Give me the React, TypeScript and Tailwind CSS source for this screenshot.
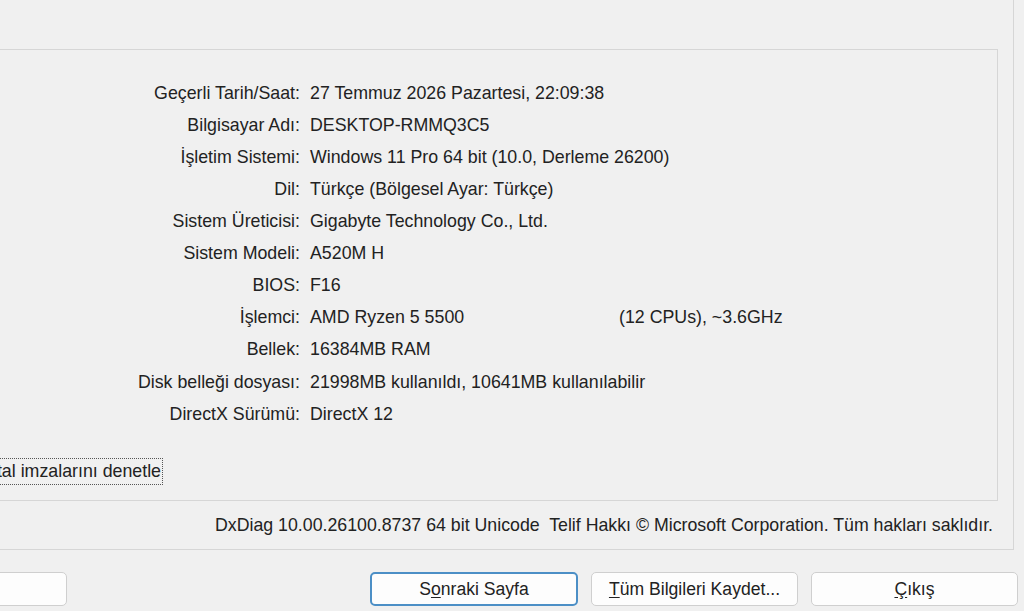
import React from "react";

const rows: [string, string, string?][] = [
  ["Geçerli Tarih/Saat:", "27 Temmuz 2026 Pazartesi, 22:09:38"],
  ["Bilgisayar Adı:", "DESKTOP-RMMQ3C5"],
  ["İşletim Sistemi:", "Windows 11 Pro 64 bit (10.0, Derleme 26200)"],
  ["Dil:", "Türkçe (Bölgesel Ayar: Türkçe)"],
  ["Sistem Üreticisi:", "Gigabyte Technology Co., Ltd."],
  ["Sistem Modeli:", "A520M H"],
  ["BIOS:", "F16"],
  ["İşlemci:", "AMD Ryzen 5 5500", "(12 CPUs), ~3.6GHz"],
  ["Bellek:", "16384MB RAM"],
  ["Disk belleği dosyası:", "21998MB kullanıldı, 10641MB kullanılabilir"],
  ["DirectX Sürümü:", "DirectX 12"],
];

// Alt çizgili kısayol harfi olan buton
const DlgButton: React.FC<{
  before?: string;
  mnemonic?: string;
  after?: string;
  focused?: boolean;
  className?: string;
}> = ({ before = "", mnemonic = "", after = "", focused, className = "" }) => (
  <div
    className={`h-[34px] rounded-[5px] bg-[#fdfdfd] flex items-center justify-center text-[17.6px] text-[#222] ${
      focused ? "border-2 border-[#4c8fc6]" : "border border-[#cfcfcf]"
    } ${className}`}
  >
    {before}
    {mnemonic && <span className="underline underline-offset-2">{mnemonic}</span>}
    {after}
  </div>
);

export default function App() {
  return (
    <div
      className="w-[1024px] h-[611px] bg-[#f0f0f0] overflow-hidden text-[#222]"
      style={{ fontFamily: '"Liberation Sans", Arial, sans-serif' }}
    >
      {/* Sekme sayfası */}
      <div className="h-[550px] w-[1014px] border-r border-b border-[#d6d6d6] pt-[49px] pr-[15px]">
        {/* Sistem bilgisi grup kutusu */}
        <div className="h-[452px] border-t border-r border-b border-[#d6d6d6] pt-[27px]">
          {rows.map(([label, value, extra]) => (
            <div key={label} className="h-[32.1px] flex items-center text-[17.8px]">
              <div className="w-[300px] text-right whitespace-nowrap">{label}</div>
              <div className="pl-[10px] w-[319px] whitespace-nowrap">{value}</div>
              {extra && <div className="whitespace-nowrap">{extra}</div>}
            </div>
          ))}
          <div className="mt-[28px] flex justify-end w-[163px] overflow-hidden">
            <div className="border border-dotted border-[#555] h-[27px] px-[1px] flex items-center text-[17.8px] whitespace-nowrap">
              Dijital imzalarını denetle
            </div>
          </div>
        </div>
        {/* Sürüm satırı */}
        <div className="h-[48px] flex items-center justify-end pr-[5px] text-[17.75px] whitespace-nowrap">
          DxDiag 10.00.26100.8737 64 bit Unicode&nbsp; Telif Hakkı © Microsoft Corporation. Tüm hakları saklıdır.
        </div>
      </div>

      {/* Butonlar */}
      <div className="mt-[22px] flex">
        <DlgButton className="w-[110px] ml-[-43px]" />
        <DlgButton className="w-[208px] ml-[303px]" before="S" mnemonic="o" after="nraki Sayfa" focused />
        <DlgButton className="w-[207px] ml-[13px]" mnemonic="T" after="üm Bilgileri Kaydet..." />
        <DlgButton className="w-[207px] ml-[13px]" mnemonic="Ç" after="ıkış" />
      </div>
    </div>
  );
}
